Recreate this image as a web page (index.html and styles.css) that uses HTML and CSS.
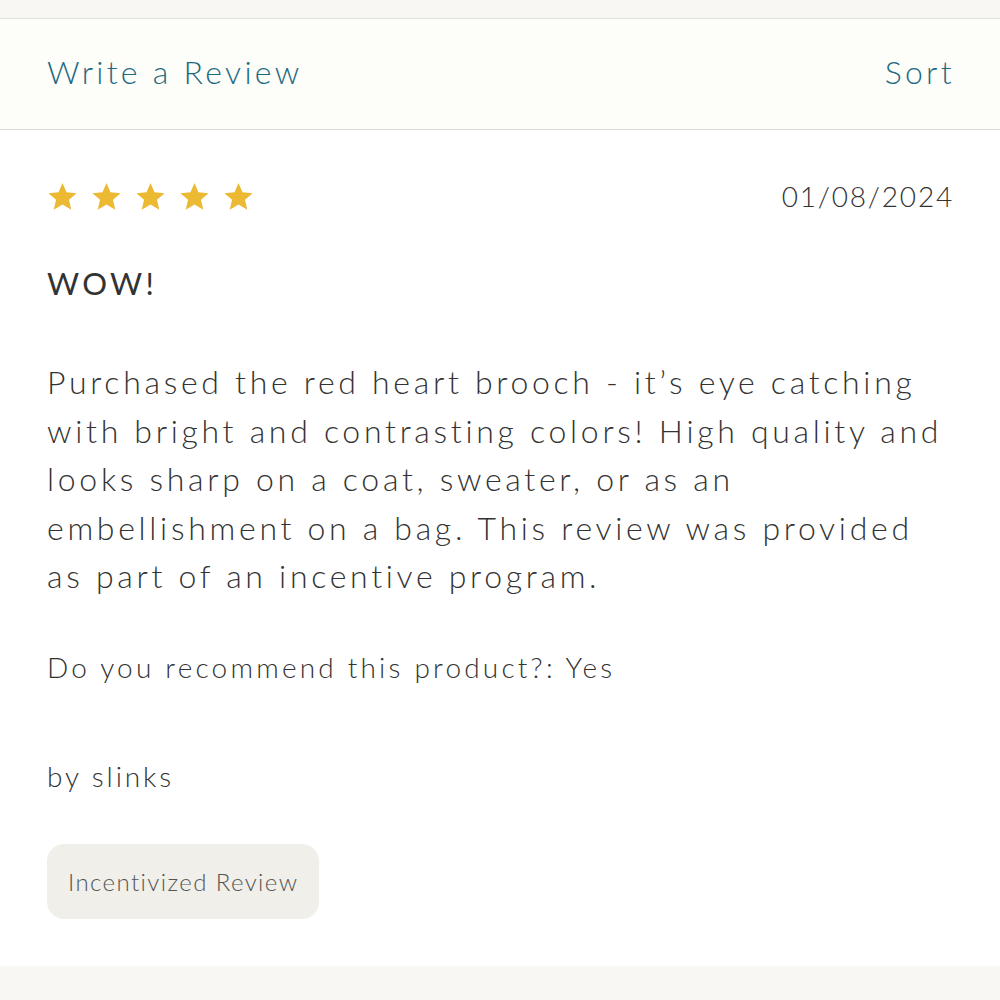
FILE: index.html
```html
<!DOCTYPE html>
<html>
<head>
<meta charset="utf-8">
<link rel="stylesheet" href="styles.css">
</head>
<body>
<div class="topband"></div>
<header class="toolbar">
  <span class="link">Write a Review</span>
  <span class="link">Sort</span>
</header>
<main class="review">
  <div class="meta">
    <div class="stars">
      <svg viewBox="0 0 24 24" class="star"><path d="M12 1.5l3.1 7.2 7.8.7-5.9 5.2 1.8 7.7L12 18.2l-6.8 4.1 1.8-7.7L1.1 9.4l7.8-.7z"/></svg>
      <svg viewBox="0 0 24 24" class="star"><path d="M12 1.5l3.1 7.2 7.8.7-5.9 5.2 1.8 7.7L12 18.2l-6.8 4.1 1.8-7.7L1.1 9.4l7.8-.7z"/></svg>
      <svg viewBox="0 0 24 24" class="star"><path d="M12 1.5l3.1 7.2 7.8.7-5.9 5.2 1.8 7.7L12 18.2l-6.8 4.1 1.8-7.7L1.1 9.4l7.8-.7z"/></svg>
      <svg viewBox="0 0 24 24" class="star"><path d="M12 1.5l3.1 7.2 7.8.7-5.9 5.2 1.8 7.7L12 18.2l-6.8 4.1 1.8-7.7L1.1 9.4l7.8-.7z"/></svg>
      <svg viewBox="0 0 24 24" class="star"><path d="M12 1.5l3.1 7.2 7.8.7-5.9 5.2 1.8 7.7L12 18.2l-6.8 4.1 1.8-7.7L1.1 9.4l7.8-.7z"/></svg>
    </div>
    <span class="date">01/08/2024</span>
  </div>
  <h2 class="title">WOW!</h2>
  <p class="body">Purchased the red heart brooch - it’s eye catching with bright and contrasting colors! High quality and looks sharp on a coat, sweater, or as an embellishment on a bag. This review was provided as part of an incentive program.</p>
  <p class="rec">Do you recommend this product?: Yes</p>
  <p class="author">by slinks</p>
  <span class="badge">Incentivized Review</span>
</main>
<div class="bottomband"></div>
</body>
</html>
```

FILE: styles.css
```css
html, body {
  margin: 0;
  padding: 0;
  background: #ffffff;
  font-family: Lato, "Noto Sans", sans-serif;
  color: #333333;
}
.topband {
  height: 18px;
  background: #f8f7f3;
  border-bottom: 1px solid #dededb;
}
.toolbar {
  height: 111px;
  box-sizing: border-box;
  padding: 0 48px 6px 47px;
  background: #fdfdf9;
  border-bottom: 1px solid #d9d9d6;
  display: flex;
  justify-content: space-between;
  align-items: center;
}
.link {
  color: #1c6a80;
  font-size: 32px;
  font-weight: 300;
  letter-spacing: 3.3px;
}
.link:last-child {
  margin-right: -3px;
}
.review {
  padding: 46px 48px 47px 47px;
}
.meta {
  display: flex;
  justify-content: space-between;
  align-items: center;
  height: 40px;
}
.stars {
  display: flex;
  gap: 13px;
}
.star {
  width: 31px;
  height: 31px;
  fill: #ebba32;
}
.date {
  font-size: 28px;
  font-weight: 300;
  letter-spacing: 1.8px;
  margin-right: -2px;
  color: #333;
}
.title {
  margin: 47px 0 0;
  font-size: 31px;
  font-weight: 400;
  letter-spacing: 3.4px;
  line-height: 40px;
  color: #333;
}
.body {
  margin: 55px 0 0;
  font-size: 32px;
  line-height: 48.6px;
  font-weight: 300;
  letter-spacing: 3.7px;
  color: #333;
}
.rec {
  margin: 46px 0 0;
  font-size: 28px;
  line-height: 40px;
  font-weight: 300;
  letter-spacing: 3.2px;
  color: #333;
}
.author {
  margin: 69px 0 0;
  font-size: 28px;
  line-height: 40px;
  font-weight: 300;
  letter-spacing: 2.9px;
  color: #333;
}
.badge {
  display: inline-block;
  margin-top: 48px;
  background: #f0efea;
  border-radius: 17px;
  padding: 0 21px;
  height: 75px;
  line-height: 75px;
  font-size: 24px;
  letter-spacing: 1.4px;
  color: #555;
  font-weight: 300;
}
.bottomband {
  height: 40px;
  background: #f8f7f3;
}
```
